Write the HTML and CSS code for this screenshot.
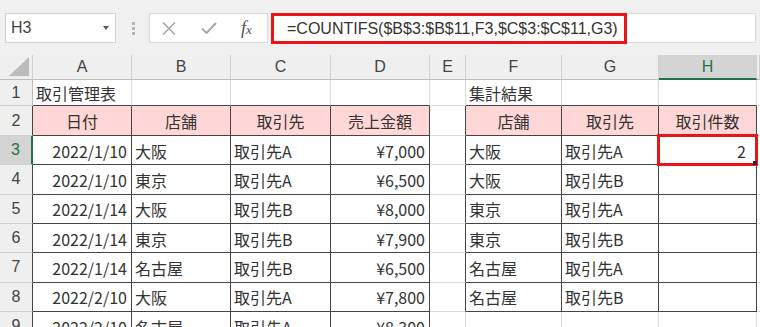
FILE: index.html
```html
<!DOCTYPE html>
<html lang="ja">
<head>
<meta charset="utf-8">
<title>COUNTIFS</title>
<link rel="stylesheet" href="styles.css">
</head>
<body>
<div class="toolbar">
  <div class="namebox"><span>H3</span><svg class="dd" width="6" height="4" viewBox="0 0 6 4"><path d="M0 0H6L3 4Z" fill="#555"/></svg></div>
  <div class="dots"><i></i><i></i><i></i></div>
  <div class="fxbox">
    <svg class="ico-x" width="14" height="13" viewBox="0 0 14 13"><path d="M1 0.5L13 12.5M13 0.5L1 12.5" stroke="#a8a8a8" stroke-width="1.6" fill="none"/></svg>
    <svg class="ico-ok" width="16" height="12" viewBox="0 0 16 12"><path d="M1 6.5L5.5 11L15 1" stroke="#a8a8a8" stroke-width="2" fill="none"/></svg>
    <span class="fx">f<small>x</small></span>
  </div>
  <div class="formula"><div class="redbox">=COUNTIFS($B$3:$B$11,F3,$C$3:$C$11,G3)</div></div>
</div>
<div class="sheet">
  <div class="corner"><svg width="20" height="19" viewBox="0 0 20 19"><path d="M20 0V19H0Z" fill="#bcbcbc"/></svg></div>
  <div class="ch">A</div><div class="ch">B</div><div class="ch">C</div><div class="ch">D</div><div class="ch">E</div><div class="ch">F</div><div class="ch">G</div><div class="ch selc">H</div><div class="ch"></div>

  <div class="rh">1</div>
  <div class="c db">取引管理表</div><div class="c db"></div><div class="c db"></div><div class="c db"></div><div class="c"></div><div class="c db">集計結果</div><div class="c db"></div><div class="c db"></div><div class="c"></div>

  <div class="rh dr">2</div>
  <div class="c pk dr db m">日付</div><div class="c pk dr db m">店舗</div><div class="c pk dr db m">取引先</div><div class="c pk dr db m">売上金額</div><div class="c dr"></div><div class="c pk dr db m">店舗</div><div class="c pk dr db m">取引先</div><div class="c pk dr db m">取引件数</div><div class="c"></div>

  <div class="rh selr">3</div>
  <div class="c dr db r">2022/1/10</div><div class="c dr db">大阪</div><div class="c dr db">取引先A</div><div class="c dr db r">¥7,000</div><div class="c dr"></div><div class="c dr db">大阪</div><div class="c dr db">取引先A</div><div class="c dr db r active">2<span class="mark"></span><span class="handle"></span></div><div class="c"></div>

  <div class="rh dr">4</div>
  <div class="c dr db r">2022/1/10</div><div class="c dr db">東京</div><div class="c dr db">取引先A</div><div class="c dr db r">¥6,500</div><div class="c dr"></div><div class="c dr db">大阪</div><div class="c dr db">取引先B</div><div class="c dr db"></div><div class="c"></div>

  <div class="rh dr">5</div>
  <div class="c dr db r">2022/1/14</div><div class="c dr db">大阪</div><div class="c dr db">取引先B</div><div class="c dr db r">¥8,000</div><div class="c dr"></div><div class="c dr db">東京</div><div class="c dr db">取引先A</div><div class="c dr db"></div><div class="c"></div>

  <div class="rh dr">6</div>
  <div class="c dr db r">2022/1/14</div><div class="c dr db">東京</div><div class="c dr db">取引先B</div><div class="c dr db r">¥7,900</div><div class="c dr"></div><div class="c dr db">東京</div><div class="c dr db">取引先B</div><div class="c dr db"></div><div class="c"></div>

  <div class="rh dr">7</div>
  <div class="c dr db r">2022/1/14</div><div class="c dr db">名古屋</div><div class="c dr db">取引先B</div><div class="c dr db r">¥6,500</div><div class="c dr"></div><div class="c dr db">名古屋</div><div class="c dr db">取引先A</div><div class="c dr db"></div><div class="c"></div>

  <div class="rh dr">8</div>
  <div class="c dr db r">2022/2/10</div><div class="c dr db">大阪</div><div class="c dr db">取引先A</div><div class="c dr db r">¥7,800</div><div class="c dr"></div><div class="c dr db">名古屋</div><div class="c dr db">取引先B</div><div class="c dr db"></div><div class="c"></div>

  <div class="rh dr">9</div>
  <div class="c dr db r">2022/2/10</div><div class="c dr db">名古屋</div><div class="c dr db">取引先A</div><div class="c dr db r">¥8,300</div><div class="c"></div><div class="c"></div><div class="c"></div><div class="c"></div><div class="c"></div>
</div>
</body>
</html>
```

FILE: styles.css
```css
* { box-sizing: border-box; }
html, body { margin: 0; padding: 0; }
body {
  width: 760px;
  height: 327px;
  overflow: hidden;
  background: #ffffff;
  font-family: "Noto Sans CJK JP", sans-serif;
  color: #333333;
}
.toolbar {
  height: 55px;
  background: #f0f0f0;
  display: flex;
  align-items: flex-start;
  padding: 13px 0 0 5px;
}
.namebox {
  width: 111px;
  height: 30px;
  background: #ffffff;
  border: 1px solid #d2d2d2;
  display: flex;
  align-items: center;
  justify-content: space-between;
  padding: 0 6px 0 5px;
  font-family: "Liberation Sans", sans-serif;
  font-size: 16px;
  color: #444444;
}
.dots {
  margin-left: 16px;
  width: 3px;
  height: 30px;
  display: flex;
  flex-direction: column;
  justify-content: center;
  gap: 2px;
}
.dots i {
  display: block;
  width: 3px;
  height: 3px;
  background: #b4b4b4;
}
.fxbox {
  margin-left: 14px;
  width: 119px;
  height: 30px;
  background: #ffffff;
  border: 1px solid #d8d8d8;
  display: flex;
  align-items: center;
  padding-left: 12px;
}
.ico-ok { margin-left: 25px; }
.fx {
  margin-left: 24px;
  font-family: "Liberation Serif", serif;
  font-style: italic;
  font-size: 18px;
  color: #505050;
  line-height: 1;
}
.fx small { font-size: 13px; }
.formula {
  margin-left: 3px;
  width: 485px;
  height: 30px;
  background: #ffffff;
  border: 1px solid #d8d8d8;
}
.redbox {
  margin: -1px 0 0 -1px;
  width: 356px;
  height: 31px;
  border: 3px solid #e8141b;
  display: flex;
  align-items: center;
  padding-left: 13px;
  font-family: "Liberation Sans", sans-serif;
  font-size: 16px;
  color: #333333;
}
.sheet {
  display: grid;
  grid-template-columns: 33px 99px 99px 100px 99px 36px 96px 97px 98px 3px;
  grid-template-rows: 25px 26px 30px repeat(7, 29.33px);
}
.corner {
  background: #efefef;
  border-right: 1px solid #d0d0d0;
  border-bottom: 1px solid #bdbdbd;
  display: flex;
  align-items: flex-end;
  justify-content: flex-end;
  padding: 0 3px 3px 0;
}
.ch {
  background: #efefef;
  border-right: 1px solid #d0d0d0;
  border-bottom: 1px solid #bdbdbd;
  display: flex;
  align-items: center;
  justify-content: center;
  font-family: "Liberation Sans", sans-serif;
  font-size: 16px;
  color: #444444;
}
.ch.selc {
  background: #d4d4d4;
  color: #217346;
  border-bottom: 2px solid #217346;
}
.rh {
  background: #efefef;
  border-right: 1px solid #bdbdbd;
  border-bottom: 1px solid #d0d0d0;
  display: flex;
  align-items: center;
  justify-content: center;
  font-family: "Liberation Sans", sans-serif;
  font-size: 16px;
  color: #444444;
}
.rh.selr {
  background: #d4d4d4;
  color: #217346;
  border-right: 2px solid #217346;
}
.c {
  border-right: 1px solid #dadada;
  border-bottom: 1px solid #dadada;
  display: flex;
  align-items: center;
  padding: 1px 3px 0 3px;
  font-size: 16px;
  line-height: 1;
  white-space: nowrap;
  min-width: 0;
}
.rh.dr, .c.dr { border-right-color: #444444; }
.c.db { border-bottom-color: #444444; }
.pk { background: #ffd7d7; }
.m { justify-content: center; }
.r { justify-content: flex-end; padding-right: 4px; }
.active {
  position: relative;
  padding-right: 10px;
}
.mark {
  position: absolute;
  top: -2px;
  left: -2px;
  right: -2px;
  bottom: -2px;
  border: 3px solid #e8141b;
}
.handle {
  position: absolute;
  right: -1px;
  bottom: -1px;
  width: 4px;
  height: 4px;
  background: #2b2b2b;
}
```
